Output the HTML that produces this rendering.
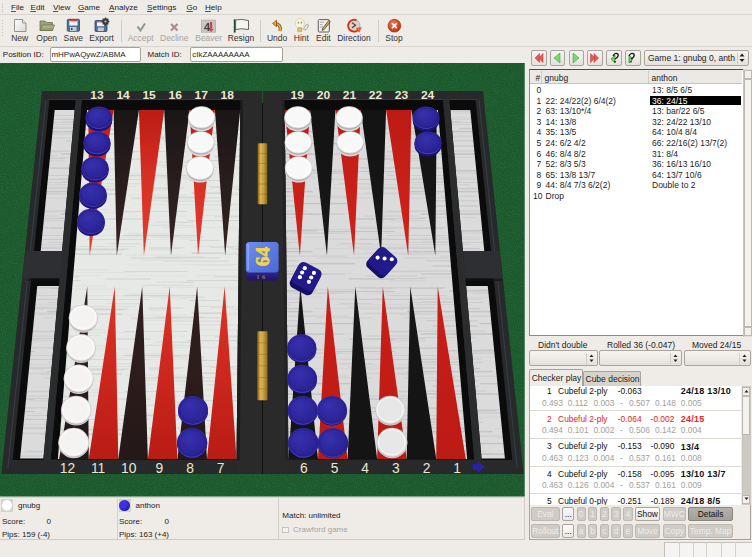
<!DOCTYPE html>
<html><head><meta charset="utf-8">
<style>
*{margin:0;padding:0;box-sizing:border-box}
html,body{width:752px;height:557px;overflow:hidden;background:#efebe7;font-family:"Liberation Sans",sans-serif;font-size:8px;color:#1c1c1c}
.a{position:absolute;white-space:nowrap}
.menu span{position:absolute;top:2.6px;font-size:8.1px}
.menu u{text-decoration-color:#555;text-underline-offset:1px}
.tb{position:absolute;top:33px;font-size:8.5px;text-align:center;width:50px;margin-left:-25px;color:#333}
.dis{color:#a8a49c}
.entry{position:absolute;background:#fff;border:1px solid #a8a39a;border-radius:2px}
.btn{position:absolute;border:1px solid #a9a49c;border-radius:2px;background:linear-gradient(#f6f4f2,#e4e0dc)}
.list{font-size:8.5px}
</style></head><body>
<!-- menubar -->
<div class="a" style="left:0;top:0;width:752px;height:15px;border-bottom:1px solid #d8d4ce"></div>
<div class="a menu" style="left:0;top:0;height:15px;width:752px">
<span style="left:11px"><u>F</u>ile</span>
<span style="left:30.5px"><u>E</u>dit</span>
<span style="left:53px"><u>V</u>iew</span>
<span style="left:78px"><u>G</u>ame</span>
<span style="left:109px"><u>A</u>nalyze</span>
<span style="left:147px"><u>S</u>ettings</span>
<span style="left:186.5px"><u>G</u>o</span>
<span style="left:205px"><u>H</u>elp</span>
</div>
<!-- toolbar -->
<div class="a" style="left:0;top:46px;width:752px;height:1px;background:#d8d4ce"></div>
<svg class="a" style="left:0;top:0" width="420" height="46">
<defs>
<linearGradient id="pg" x1="0" y1="0" x2="1" y2="1"><stop offset="0" stop-color="#ffffff"/><stop offset="1" stop-color="#d8d8d4"/></linearGradient>
<linearGradient id="fg" x1="0" y1="0" x2="0" y2="1"><stop offset="0" stop-color="#b8c090"/><stop offset="1" stop-color="#8c9464"/></linearGradient>
<radialGradient id="rg" cx="0.4" cy="0.35" r="0.7"><stop offset="0" stop-color="#f08050"/><stop offset="1" stop-color="#b83010"/></radialGradient>
</defs>
<!-- handle grips -->
<g fill="#c8c4bc"><rect x="2" y="3" width="1" height="1"/><rect x="2" y="5" width="1" height="1"/><rect x="2" y="7" width="1" height="1"/><rect x="2" y="9" width="1" height="1"/><rect x="2" y="11" width="1" height="1"/>
<rect x="2" y="20" width="1" height="1"/><rect x="2" y="23" width="1" height="1"/><rect x="2" y="26" width="1" height="1"/><rect x="2" y="29" width="1" height="1"/><rect x="2" y="32" width="1" height="1"/><rect x="2" y="35" width="1" height="1"/></g>
<!-- New -->
<path d="M14.5,19.5 H22.5 L26,23 V31.5 H14.5 Z" fill="url(#pg)" stroke="#8a8a86" stroke-width="0.9"/>
<path d="M22.5,19.5 V23 H26" fill="#e8e8e4" stroke="#8a8a86" stroke-width="0.8"/>
<!-- Open -->
<path d="M40,21 H45 L46.5,22.5 H52.5 V30.5 H40 Z" fill="#9aa276" stroke="#6e7450" stroke-width="0.8"/>
<path d="M40,30.5 L42.5,25 H54.5 L52.5,30.5 Z" fill="url(#fg)" stroke="#6e7450" stroke-width="0.8"/>
<!-- Save -->
<rect x="67.3" y="19.3" width="12.2" height="12" rx="1" fill="#4d6f9c" stroke="#2d4464" stroke-width="0.8"/>
<rect x="69.3" y="20" width="8.2" height="5.5" fill="#f4f4f4"/><rect x="69.3" y="20" width="8.2" height="1.3" fill="#d84040"/>
<rect x="70" y="27" width="6.5" height="4" fill="#c8ccd0"/><rect x="71" y="28" width="1.5" height="2" fill="#2d4464"/>
<!-- Export -->
<rect x="95" y="20.5" width="12" height="11" rx="1" fill="#4d6f9c" stroke="#2d4464" stroke-width="0.8"/>
<rect x="97" y="21.2" width="7" height="5" fill="#f4f4f4"/><rect x="97" y="21.2" width="7" height="1.2" fill="#d84040"/>
<rect x="97.8" y="27.5" width="6" height="3.6" fill="#c8ccd0"/>
<circle cx="105.5" cy="21.5" r="3.2" fill="#3a3a3a"/><circle cx="105.5" cy="21.5" r="1.2" fill="#b0b0b0"/>
<g stroke="#3a3a3a" stroke-width="1.2"><line x1="105.5" y1="17.5" x2="105.5" y2="25.5"/><line x1="101.5" y1="21.5" x2="109.5" y2="21.5"/><line x1="102.7" y1="18.7" x2="108.3" y2="24.3"/><line x1="108.3" y1="18.7" x2="102.7" y2="24.3"/></g>
<circle cx="105.5" cy="21.5" r="1.1" fill="#c0c0c0"/>
<!-- Accept -->
<path d="M137.5,26.5 L140.5,30.5 L145,23.5" fill="none" stroke="#8a9a88" stroke-width="2"/>
<!-- Decline -->
<path d="M171,24 L177.5,30.5 M177.5,24 L171,30.5" fill="none" stroke="#a88a88" stroke-width="2"/>
<!-- Beaver -->
<rect x="201" y="19.7" width="15" height="13" fill="#b8b4b0"/>
<rect x="202" y="20.7" width="13" height="11" fill="#cac6c2"/>
<text x="204" y="30.5" font-size="11" font-weight="bold" fill="#404040" font-family="Liberation Sans">4</text>
<rect x="210" y="22" width="2.2" height="8" fill="#c84a4a"/><polygon points="208.5,29 213.7,29 211.1,32" fill="#c84a4a"/>
<!-- Resign -->
<rect x="233.8" y="19.3" width="1.8" height="13.3" fill="#1e4a26"/>
<path d="M235.6,20 Q241,18.5 248.5,20.5 V29.5 Q241,28 235.6,29.5 Z" fill="#f4f4f0" stroke="#404440" stroke-width="0.8"/>
<!-- Undo -->
<path d="M280,31 Q281.5,24 275,23.5" fill="none" stroke="#7a4a0a" stroke-width="3"/>
<path d="M280,31 Q281.5,24 275,23.5" fill="none" stroke="#f0b040" stroke-width="1.6"/>
<polygon points="272.5,23.5 276.5,20.3 276.5,26.7" fill="#f0a030" stroke="#7a4a0a" stroke-width="0.7"/>
<!-- Hint -->
<circle cx="299.8" cy="23.3" r="4.6" fill="#f6f4dc" stroke="#d4d0a8" stroke-width="0.7"/>
<rect x="297.6" y="27.8" width="4.4" height="3.8" rx="0.8" fill="#d8c070" stroke="#a89040" stroke-width="0.5"/>
<g fill="#707050"><rect x="297.8" y="21.8" width="1" height="1.6"/><rect x="300.8" y="21.8" width="1" height="1.6"/></g>
<path d="M303.5,29 L306,25 Q307.5,23.5 308.5,25 L307.5,28 Q306.5,30 304.5,30 Z" fill="#ecece4" stroke="#8c8c84" stroke-width="0.7"/>
<!-- Edit -->
<rect x="318.3" y="19.6" width="11" height="12.4" rx="1" fill="#f0f0ee" stroke="#606060" stroke-width="1"/>
<g stroke="#8a8a8a" stroke-width="0.7"><line x1="320" y1="22.2" x2="324" y2="22.2"/><line x1="320" y1="24.6" x2="322.5" y2="24.6"/><line x1="320" y1="27" x2="323" y2="27"/></g>
<path d="M322.5,28.5 L328.8,20.5 L330.3,21.7 L324,29.7 L322,30.3 Z" fill="#e0b040" stroke="#303030" stroke-width="0.7"/>
<!-- Direction -->
<circle cx="354.2" cy="25.4" r="5.8" fill="#d4d4d0" stroke="#909090" stroke-width="0.6"/>
<path d="M356.5,20.3 A5.9,5.9 0 1 0 358.8,29.2" fill="none" stroke="#e02a12" stroke-width="1.9"/>
<path d="M352,22.6 L355.6,25.2 L352,27.8" fill="none" stroke="#3a3a3a" stroke-width="1.1"/>
<polygon points="356.2,28.2 361.2,27.6 359.2,32.2" fill="#f06a20" stroke="#c04010" stroke-width="0.5"/>
<!-- Stop -->
<circle cx="394.4" cy="25.7" r="6.4" fill="url(#rg)" stroke="#902808" stroke-width="0.6"/>
<path d="M392,23.3 L396.8,28.1 M396.8,23.3 L392,28.1" stroke="#fff" stroke-width="1.6"/>
</svg>

<div class="tb" style="left:19.7px">New</div>
<div class="tb" style="left:46.7px">Open</div>
<div class="tb" style="left:73.3px">Save</div>
<div class="tb" style="left:101.6px">Export</div>
<div class="tb dis" style="left:140.7px">Accept</div>
<div class="tb dis" style="left:174.3px">Decline</div>
<div class="tb dis" style="left:208.7px">Beaver</div>
<div class="tb" style="left:240.9px">Resign</div>
<div class="tb" style="left:277.1px">Undo</div>
<div class="tb" style="left:301.4px">Hint</div>
<div class="tb" style="left:323.4px">Edit</div>
<div class="tb" style="left:354px">Direction</div>
<div class="tb" style="left:394px">Stop</div>
<div class="a" style="left:120.5px;top:20px;width:1px;height:22px;background:#d0ccc6"></div>
<div class="a" style="left:259.5px;top:20px;width:1px;height:22px;background:#d0ccc6"></div>
<div class="a" style="left:377.5px;top:20px;width:1px;height:22px;background:#d0ccc6"></div>
<!-- ids row -->
<div class="a" style="left:2.8px;top:50.3px;font-size:8px">Position ID:</div>
<div class="entry" style="left:49.5px;top:47px;width:91.5px;height:14.5px"></div>
<div class="a" style="left:51.5px;top:50.3px;font-size:7.95px">mHPwAQywZ/ABMA</div>
<div class="a" style="left:147.5px;top:50.3px;font-size:8px">Match ID:</div>
<div class="entry" style="left:190px;top:47px;width:93px;height:14.5px"></div>
<div class="a" style="left:192.3px;top:50.3px;font-size:7.95px">cIkZAAAAAAAA</div>
<!-- board -->
<svg class="a" style="left:0;top:0" width="752" height="557" font-family="Liberation Sans">
<defs>
<linearGradient id="redTL" x1="0" y1="0" x2="0" y2="1"><stop offset="0" stop-color="#bc1c14"/><stop offset="0.5" stop-color="#d83226"/><stop offset="1" stop-color="#e03c2e"/></linearGradient>
<linearGradient id="redTR" x1="0" y1="0" x2="0" y2="1"><stop offset="0" stop-color="#bc1a14"/><stop offset="0.5" stop-color="#c82018"/><stop offset="1" stop-color="#cc2419"/></linearGradient>
<linearGradient id="redBL" x1="0" y1="1" x2="0" y2="0"><stop offset="0" stop-color="#b81c14"/><stop offset="0.6" stop-color="#d02a20"/><stop offset="1" stop-color="#dc3628"/></linearGradient>
<linearGradient id="redBR" x1="0" y1="1" x2="0" y2="0"><stop offset="0" stop-color="#bc1a14"/><stop offset="1" stop-color="#c82018"/></linearGradient>
<linearGradient id="blkTL" x1="0" y1="0" x2="0" y2="1"><stop offset="0" stop-color="#1a1616"/><stop offset="1" stop-color="#382424"/></linearGradient>
<linearGradient id="blkTR" x1="0" y1="0" x2="0" y2="1"><stop offset="0" stop-color="#131313"/><stop offset="1" stop-color="#1a1818"/></linearGradient>
<linearGradient id="blkBL" x1="0" y1="1" x2="0" y2="0"><stop offset="0" stop-color="#241818"/><stop offset="1" stop-color="#34201f"/></linearGradient>
<linearGradient id="blkBR" x1="0" y1="1" x2="0" y2="0"><stop offset="0" stop-color="#141414"/><stop offset="1" stop-color="#181616"/></linearGradient>
<radialGradient id="bface" cx="0.4" cy="0.35" r="0.75"><stop offset="0" stop-color="#3630ac"/><stop offset="0.7" stop-color="#2c2498"/><stop offset="1" stop-color="#282090"/></radialGradient>
<linearGradient id="gold" x1="0" y1="0" x2="1" y2="0"><stop offset="0" stop-color="#7a5a18"/><stop offset="0.3" stop-color="#dcb450"/><stop offset="0.6" stop-color="#c8a040"/><stop offset="1" stop-color="#8a6820"/></linearGradient>
<linearGradient id="cube" x1="0" y1="0" x2="1" y2="1"><stop offset="0" stop-color="#6e8eec"/><stop offset="1" stop-color="#4a68d6"/></linearGradient>
<linearGradient id="cubeF" x1="0" y1="0" x2="0" y2="1"><stop offset="0" stop-color="#3a40a8"/><stop offset="1" stop-color="#24106a"/></linearGradient>
<linearGradient id="wsideT" x1="0" y1="0" x2="0" y2="1"><stop offset="0" stop-color="#a8a8a8"/><stop offset="1" stop-color="#e4e4e4"/></linearGradient>
<linearGradient id="bsideT" x1="0" y1="0" x2="0" y2="1"><stop offset="0" stop-color="#1a1270"/><stop offset="1" stop-color="#3a30a8"/></linearGradient>

<pattern id="wood" patternUnits="userSpaceOnUse" width="180" height="60"><rect width="180" height="60" fill="#e7e9e7"/>
<rect x="58.3" y="9.1" width="65.6" height="1.4" fill="#d6d8d6"/>
<rect x="16.9" y="35.0" width="83.7" height="0.6" fill="#dcdedc"/>
<rect x="15.5" y="25.1" width="36.8" height="0.6" fill="#dfe1df"/>
<rect x="148.8" y="7.4" width="35.6" height="1.4" fill="#d6d8d6"/>
<rect x="-31.2" y="7.4" width="35.6" height="1" fill="#d6d8d6"/>
<rect x="105.4" y="3.0" width="35.5" height="1" fill="#dcdedc"/>
<rect x="75.4" y="32.4" width="60.0" height="0.6" fill="#dcdedc"/>
<rect x="104.7" y="38.3" width="46.1" height="1.4" fill="#d6d8d6"/>
<rect x="10.7" y="12.4" width="67.6" height="1" fill="#dfe1df"/>
<rect x="83.8" y="55.4" width="45.3" height="0.6" fill="#dcdedc"/>
<rect x="125.8" y="14.6" width="60.2" height="1" fill="#dfe1df"/>
<rect x="-54.2" y="14.6" width="60.2" height="1" fill="#dfe1df"/>
<rect x="131.3" y="17.3" width="88.6" height="1.4" fill="#d6d8d6"/>
<rect x="-48.7" y="17.3" width="88.6" height="1" fill="#d6d8d6"/>
<rect x="75.3" y="45.4" width="30.6" height="1" fill="#dfe1df"/>
<rect x="7.1" y="40.1" width="73.5" height="1" fill="#d2d4d2"/>
<rect x="125.2" y="35.7" width="60.6" height="0.6" fill="#dfe1df"/>
<rect x="-54.8" y="35.7" width="60.6" height="1" fill="#dfe1df"/>
<rect x="151.2" y="56.7" width="53.2" height="0.6" fill="#d6d8d6"/>
<rect x="-28.8" y="56.7" width="53.2" height="1" fill="#d6d8d6"/>
<rect x="131.6" y="18.6" width="60.5" height="1" fill="#dfe1df"/>
<rect x="-48.4" y="18.6" width="60.5" height="1" fill="#dfe1df"/>
<rect x="129.0" y="53.2" width="44.3" height="1" fill="#dfe1df"/>
<rect x="30.2" y="7.0" width="24.1" height="0.6" fill="#d2d4d2"/>
<rect x="132.9" y="23.9" width="84.2" height="0.6" fill="#dfe1df"/>
<rect x="-47.1" y="23.9" width="84.2" height="1" fill="#dfe1df"/>
<rect x="29.9" y="24.1" width="39.4" height="1" fill="#dcdedc"/>
<rect x="155.5" y="16.7" width="49.1" height="1.4" fill="#d2d4d2"/>
<rect x="-24.5" y="16.7" width="49.1" height="1" fill="#d2d4d2"/>
<rect x="159.2" y="57.5" width="30.6" height="0.6" fill="#dcdedc"/>
<rect x="-20.8" y="57.5" width="30.6" height="1" fill="#dcdedc"/>
<rect x="41.8" y="14.0" width="53.9" height="1" fill="#dcdedc"/>
<rect x="50.7" y="8.7" width="57.4" height="0.6" fill="#d2d4d2"/>
<rect x="124.3" y="30.9" width="63.2" height="1" fill="#d6d8d6"/>
<rect x="-55.7" y="30.9" width="63.2" height="1" fill="#d6d8d6"/>
<rect x="161.9" y="46.8" width="81.2" height="1" fill="#dfe1df"/>
<rect x="-18.1" y="46.8" width="81.2" height="1" fill="#dfe1df"/>
<rect x="71.8" y="6.2" width="64.4" height="0.6" fill="#d6d8d6"/>
<rect x="12.1" y="12.5" width="31.4" height="1.4" fill="#d2d4d2"/>
<rect x="9.5" y="0.0" width="30.6" height="1" fill="#d6d8d6"/>
<rect x="110.5" y="4.2" width="34.6" height="0.6" fill="#dfe1df"/>
<rect x="114.2" y="57.3" width="62.2" height="0.6" fill="#dfe1df"/>
<rect x="20.8" y="29.3" width="88.4" height="1" fill="#dfe1df"/>
<rect x="56.1" y="8.6" width="72.5" height="1" fill="#d2d4d2"/>
<rect x="149.2" y="9.7" width="21.6" height="0.6" fill="#d2d4d2"/>
<rect x="124.2" y="54.8" width="73.1" height="1.4" fill="#d2d4d2"/>
<rect x="-55.8" y="54.8" width="73.1" height="1" fill="#d2d4d2"/>
<rect x="155.4" y="41.8" width="38.3" height="0.6" fill="#d2d4d2"/>
<rect x="-24.6" y="41.8" width="38.3" height="1" fill="#d2d4d2"/>
<rect x="64.0" y="13.4" width="57.9" height="1.4" fill="#d2d4d2"/>
<rect x="40.1" y="48.7" width="88.9" height="0.6" fill="#dcdedc"/>
<rect x="147.3" y="44.4" width="35.9" height="1" fill="#dfe1df"/>
<rect x="-32.7" y="44.4" width="35.9" height="1" fill="#dfe1df"/>
<rect x="131.6" y="59.4" width="75.3" height="1" fill="#dfe1df"/>
<rect x="-48.4" y="59.4" width="75.3" height="1" fill="#dfe1df"/>
<rect x="34.9" y="36.3" width="44.1" height="1" fill="#d2d4d2"/>
<rect x="14.5" y="6.1" width="52.9" height="0.6" fill="#d2d4d2"/>
<rect x="86.9" y="59.1" width="62.7" height="1" fill="#d6d8d6"/>
<rect x="163.7" y="20.6" width="65.0" height="1" fill="#d6d8d6"/>
<rect x="-16.3" y="20.6" width="65.0" height="1" fill="#d6d8d6"/>
<rect x="140.8" y="45.0" width="53.5" height="1" fill="#dcdedc"/>
<rect x="-39.2" y="45.0" width="53.5" height="1" fill="#dcdedc"/>
<rect x="142.0" y="20.0" width="76.1" height="1" fill="#dfe1df"/>
<rect x="-38.0" y="20.0" width="76.1" height="1" fill="#dfe1df"/>
</pattern>
<pattern id="woodR" patternUnits="userSpaceOnUse" width="180" height="60"><rect width="180" height="60" fill="#dadbda"/>
<rect x="72.2" y="56.8" width="70.7" height="0.6" fill="#cfd0cf"/>
<rect x="5.0" y="35.4" width="52.6" height="1.4" fill="#cfd0cf"/>
<rect x="148.8" y="58.8" width="66.0" height="0.6" fill="#c4c5c4"/>
<rect x="-31.2" y="58.8" width="66.0" height="1" fill="#c4c5c4"/>
<rect x="98.8" y="7.9" width="21.0" height="1.4" fill="#c8c9c8"/>
<rect x="134.9" y="8.4" width="89.1" height="0.6" fill="#cfd0cf"/>
<rect x="-45.1" y="8.4" width="89.1" height="1" fill="#cfd0cf"/>
<rect x="5.0" y="12.8" width="55.1" height="1" fill="#c4c5c4"/>
<rect x="98.0" y="50.1" width="24.3" height="1" fill="#c4c5c4"/>
<rect x="119.2" y="48.9" width="56.2" height="1.4" fill="#cfd0cf"/>
<rect x="27.3" y="30.6" width="81.1" height="1.4" fill="#cfd0cf"/>
<rect x="0.7" y="48.0" width="32.1" height="1.4" fill="#d2d3d2"/>
<rect x="130.5" y="33.4" width="42.8" height="0.6" fill="#d2d3d2"/>
<rect x="159.0" y="3.4" width="33.4" height="0.6" fill="#c8c9c8"/>
<rect x="-21.0" y="3.4" width="33.4" height="1" fill="#c8c9c8"/>
<rect x="91.4" y="33.7" width="73.2" height="1" fill="#c8c9c8"/>
<rect x="58.6" y="58.4" width="62.4" height="1.4" fill="#cfd0cf"/>
<rect x="49.9" y="30.5" width="76.5" height="1.4" fill="#cfd0cf"/>
<rect x="94.2" y="52.6" width="84.9" height="1" fill="#cfd0cf"/>
<rect x="24.7" y="7.3" width="50.9" height="1.4" fill="#c8c9c8"/>
<rect x="43.3" y="4.4" width="66.9" height="0.6" fill="#c8c9c8"/>
<rect x="169.1" y="38.6" width="45.6" height="0.6" fill="#c4c5c4"/>
<rect x="-10.9" y="38.6" width="45.6" height="1" fill="#c4c5c4"/>
<rect x="174.2" y="13.2" width="86.7" height="1" fill="#d2d3d2"/>
<rect x="-5.8" y="13.2" width="86.7" height="1" fill="#d2d3d2"/>
<rect x="29.3" y="40.1" width="35.7" height="1.4" fill="#d2d3d2"/>
<rect x="72.7" y="25.3" width="45.0" height="1.4" fill="#c8c9c8"/>
<rect x="65.9" y="20.3" width="52.1" height="1" fill="#c8c9c8"/>
<rect x="59.7" y="37.4" width="55.9" height="0.6" fill="#c8c9c8"/>
<rect x="177.3" y="47.3" width="88.0" height="0.6" fill="#c8c9c8"/>
<rect x="-2.7" y="47.3" width="88.0" height="1" fill="#c8c9c8"/>
<rect x="47.8" y="2.4" width="74.5" height="0.6" fill="#c4c5c4"/>
<rect x="147.6" y="51.0" width="67.3" height="1" fill="#c4c5c4"/>
<rect x="-32.4" y="51.0" width="67.3" height="1" fill="#c4c5c4"/>
<rect x="26.9" y="55.2" width="59.9" height="0.6" fill="#c4c5c4"/>
<rect x="50.2" y="48.0" width="32.8" height="1" fill="#c8c9c8"/>
<rect x="168.9" y="38.1" width="76.1" height="1.4" fill="#c8c9c8"/>
<rect x="-11.1" y="38.1" width="76.1" height="1" fill="#c8c9c8"/>
<rect x="154.1" y="4.0" width="80.4" height="0.6" fill="#d2d3d2"/>
<rect x="-25.9" y="4.0" width="80.4" height="1" fill="#d2d3d2"/>
<rect x="61.0" y="33.2" width="84.9" height="1.4" fill="#c4c5c4"/>
<rect x="23.3" y="31.6" width="36.7" height="0.6" fill="#c8c9c8"/>
<rect x="47.1" y="10.9" width="85.3" height="1.4" fill="#c4c5c4"/>
<rect x="136.7" y="17.4" width="55.0" height="1" fill="#cfd0cf"/>
<rect x="-43.3" y="17.4" width="55.0" height="1" fill="#cfd0cf"/>
<rect x="62.5" y="1.1" width="37.5" height="0.6" fill="#c8c9c8"/>
<rect x="132.0" y="33.1" width="33.3" height="0.6" fill="#d2d3d2"/>
<rect x="168.2" y="6.4" width="77.3" height="1.4" fill="#d2d3d2"/>
<rect x="-11.8" y="6.4" width="77.3" height="1" fill="#d2d3d2"/>
<rect x="89.1" y="50.1" width="47.5" height="1.4" fill="#c4c5c4"/>
<rect x="38.7" y="13.8" width="33.9" height="1" fill="#cfd0cf"/>
<rect x="178.1" y="58.9" width="78.6" height="0.6" fill="#c8c9c8"/>
<rect x="-1.9" y="58.9" width="78.6" height="1" fill="#c8c9c8"/>
<rect x="112.6" y="52.8" width="50.2" height="0.6" fill="#c8c9c8"/>
<rect x="119.7" y="22.9" width="55.4" height="1.4" fill="#c4c5c4"/>
<rect x="43.6" y="17.6" width="52.2" height="1" fill="#cfd0cf"/>
<rect x="80.2" y="15.8" width="87.3" height="0.6" fill="#c4c5c4"/>
<rect x="6.2" y="52.9" width="35.3" height="0.6" fill="#cfd0cf"/>
</pattern>
</defs>
<filter id="noise" x="0" y="0" width="100%" height="100%"><feTurbulence type="fractalNoise" baseFrequency="0.9" numOctaves="2" seed="3"/><feColorMatrix values="0 0 0 0 0.08  0 0 0 0 0.34  0 0 0 0 0.16  0 0 0 1.6 -0.6"/><feComposite in2="SourceGraphic" operator="in"/></filter>
<rect x="0" y="63" width="524.7" height="433.5" fill="#1b582b"/>
<rect x="0" y="63" width="524.7" height="433.5" fill="#1b582b" filter="url(#noise)" opacity="0.3"/>
<polygon points="42.02,91.00 482.98,91.00 523.68,474.00 1.32,474.00" fill="#28292b"/>
<line x1="46.04" y1="100" x2="7.81" y2="468" stroke="#3c4450" stroke-width="0.8"/>
<line x1="478.96" y1="100" x2="517.19" y2="468" stroke="#3c4450" stroke-width="0.8"/>
<line x1="47.58" y1="99.5" x2="477.42" y2="99.5" stroke="#3a3e44" stroke-width="0.8"/>
<polygon points="49.52,100.00 77.19,100.00 45.17,460.00 12.73,460.00" fill="#0b0b0b"/>
<polygon points="81.87,100.00 240.36,100.00 236.54,459.50 50.70,459.50" fill="#0b0b0b"/>
<polygon points="447.81,100.00 475.48,100.00 512.27,460.00 479.83,460.00" fill="#0b0b0b"/>
<polygon points="284.64,100.00 443.13,100.00 474.30,459.50 288.46,459.50" fill="#0b0b0b"/>
<polygon points="87.10,110.00 240.25,110.00 236.54,459.00 57.86,459.00" fill="url(#wood)"/>
<polygon points="284.75,110.00 437.90,110.00 467.14,459.00 288.46,459.00" fill="url(#woodR)"/>
<polygon points="54.70,110.00 74.70,110.00 62.05,251.00 40.71,251.00" fill="url(#woodR)"/>
<polygon points="37.23,286.00 58.91,286.00 43.44,458.50 20.11,458.50" fill="url(#woodR)"/>
<polygon points="25.55,251.00 63.76,251.00 61.32,278.50 22.63,278.50" fill="#2d2f32"/>
<polygon points="27.43,278.50 61.32,278.50 61.09,281.00 27.17,281.00" fill="#141414" opacity="0.6"/>
<polygon points="75.64,99.50 81.91,99.50 50.66,460.00 43.31,460.00" fill="#2b2c2e"/>
<polygon points="450.30,110.00 470.30,110.00 484.29,251.00 462.95,251.00" fill="url(#woodR)"/>
<polygon points="466.09,286.00 487.77,286.00 504.89,458.50 481.56,458.50" fill="url(#woodR)"/>
<polygon points="461.24,251.00 499.45,251.00 502.37,278.50 463.68,278.50" fill="#2d2f32"/>
<polygon points="463.68,278.50 502.37,278.50 502.63,281.00 463.91,281.00" fill="#141414" opacity="0.6"/>
<polygon points="443.09,99.50 449.36,99.50 481.69,460.00 474.34,460.00" fill="#2b2c2e"/>
<polygon points="240.45,91.00 284.55,91.00 288.62,474.00 236.38,474.00" fill="#2a2a2a"/>
<polygon points="240.36,100.00 243.09,100.00 239.74,460.00 236.53,460.00" fill="#121212" opacity="0.55"/>
<polygon points="281.91,100.00 284.64,100.00 288.47,460.00 285.26,460.00" fill="#181818" opacity="0.35"/>
<line x1="262.50" y1="91" x2="262.50" y2="474" stroke="#101010" stroke-width="0.9"/>
<line x1="262.50" y1="91" x2="262.50" y2="103" stroke="#1c5c2d" stroke-width="0.9"/>
<polygon points="88.25,110.00 113.58,110.00 89.66,255.80" fill="url(#redTL)"/>
<polygon points="59.21,459.00 88.76,459.00 87.30,286.50" fill="url(#blkBL)"/>
<polygon points="113.58,110.00 138.92,110.00 116.76,255.80" fill="url(#blkTL)"/>
<polygon points="88.76,459.00 118.32,459.00 114.76,286.50" fill="url(#redBL)"/>
<polygon points="138.92,110.00 164.25,110.00 143.86,255.80" fill="url(#redTL)"/>
<polygon points="118.32,459.00 147.87,459.00 142.23,286.50" fill="url(#blkBL)"/>
<polygon points="164.25,110.00 189.58,110.00 170.96,255.80" fill="url(#blkTL)"/>
<polygon points="147.87,459.00 177.43,459.00 169.70,286.50" fill="url(#redBL)"/>
<polygon points="189.58,110.00 214.92,110.00 198.05,255.80" fill="url(#redTL)"/>
<polygon points="177.43,459.00 206.99,459.00 197.17,286.50" fill="url(#blkBL)"/>
<polygon points="214.92,110.00 240.25,110.00 225.15,255.80" fill="url(#blkTL)"/>
<polygon points="206.99,459.00 236.54,459.00 224.64,286.50" fill="url(#redBL)"/>
<polygon points="284.75,110.00 310.08,110.00 299.85,255.80" fill="url(#redTR)"/>
<polygon points="288.46,459.00 318.01,459.00 300.36,286.50" fill="url(#blkBR)"/>
<polygon points="310.08,110.00 335.42,110.00 326.95,255.80" fill="url(#blkTR)"/>
<polygon points="318.01,459.00 347.57,459.00 327.83,286.50" fill="url(#redBR)"/>
<polygon points="335.42,110.00 360.75,110.00 354.04,255.80" fill="url(#redTR)"/>
<polygon points="347.57,459.00 377.13,459.00 355.30,286.50" fill="url(#blkBR)"/>
<polygon points="360.75,110.00 386.08,110.00 381.14,255.80" fill="url(#blkTR)"/>
<polygon points="377.13,459.00 406.68,459.00 382.77,286.50" fill="url(#redBR)"/>
<polygon points="386.08,110.00 411.42,110.00 408.24,255.80" fill="url(#redTR)"/>
<polygon points="406.68,459.00 436.24,459.00 410.24,286.50" fill="url(#blkBR)"/>
<polygon points="411.42,110.00 436.75,110.00 435.34,255.80" fill="url(#blkTR)"/>
<polygon points="436.24,459.00 465.79,459.00 437.70,286.50" fill="url(#redBR)"/>
<polygon points="84.75,100.00 240.36,100.00 240.25,110.00 83.90,110.00" fill="#0b0b0b"/>
<polygon points="284.64,100.00 440.25,100.00 441.10,110.00 284.75,110.00" fill="#0b0b0b"/>
<rect x="257.6" y="143.3" width="9.6" height="61" rx="1.2" fill="url(#gold)"/>
<line x1="258.1" y1="153.5" x2="266.70000000000005" y2="153.5" stroke="#7a5a20" stroke-width="0.5" opacity="0.7"/>
<line x1="258.1" y1="163.6" x2="266.70000000000005" y2="163.6" stroke="#7a5a20" stroke-width="0.5" opacity="0.7"/>
<line x1="258.1" y1="173.8" x2="266.70000000000005" y2="173.8" stroke="#7a5a20" stroke-width="0.5" opacity="0.7"/>
<line x1="258.1" y1="184.0" x2="266.70000000000005" y2="184.0" stroke="#7a5a20" stroke-width="0.5" opacity="0.7"/>
<line x1="258.1" y1="194.1" x2="266.70000000000005" y2="194.1" stroke="#7a5a20" stroke-width="0.5" opacity="0.7"/>
<rect x="257.2" y="331.3" width="10.4" height="69" rx="1.2" fill="url(#gold)"/>
<line x1="257.7" y1="342.8" x2="267.09999999999997" y2="342.8" stroke="#7a5a20" stroke-width="0.5" opacity="0.7"/>
<line x1="257.7" y1="354.3" x2="267.09999999999997" y2="354.3" stroke="#7a5a20" stroke-width="0.5" opacity="0.7"/>
<line x1="257.7" y1="365.8" x2="267.09999999999997" y2="365.8" stroke="#7a5a20" stroke-width="0.5" opacity="0.7"/>
<line x1="257.7" y1="377.3" x2="267.09999999999997" y2="377.3" stroke="#7a5a20" stroke-width="0.5" opacity="0.7"/>
<line x1="257.7" y1="388.8" x2="267.09999999999997" y2="388.8" stroke="#7a5a20" stroke-width="0.5" opacity="0.7"/>
<text x="90.3" y="99.2" font-size="10.6" font-weight="bold" fill="#ebe7d2" textLength="13.4" lengthAdjust="spacingAndGlyphs">13</text>
<text x="116.4" y="99.2" font-size="10.6" font-weight="bold" fill="#ebe7d2" textLength="13.4" lengthAdjust="spacingAndGlyphs">14</text>
<text x="142.4" y="99.2" font-size="10.6" font-weight="bold" fill="#ebe7d2" textLength="13.4" lengthAdjust="spacingAndGlyphs">15</text>
<text x="168.5" y="99.2" font-size="10.6" font-weight="bold" fill="#ebe7d2" textLength="13.4" lengthAdjust="spacingAndGlyphs">16</text>
<text x="194.5" y="99.2" font-size="10.6" font-weight="bold" fill="#ebe7d2" textLength="13.4" lengthAdjust="spacingAndGlyphs">17</text>
<text x="220.6" y="99.2" font-size="10.6" font-weight="bold" fill="#ebe7d2" textLength="13.4" lengthAdjust="spacingAndGlyphs">18</text>
<text x="290.6" y="99.2" font-size="10.6" font-weight="bold" fill="#ebe7d2" textLength="13.4" lengthAdjust="spacingAndGlyphs">19</text>
<text x="316.7" y="99.2" font-size="10.6" font-weight="bold" fill="#ebe7d2" textLength="13.4" lengthAdjust="spacingAndGlyphs">20</text>
<text x="342.7" y="99.2" font-size="10.6" font-weight="bold" fill="#ebe7d2" textLength="13.4" lengthAdjust="spacingAndGlyphs">21</text>
<text x="368.8" y="99.2" font-size="10.6" font-weight="bold" fill="#ebe7d2" textLength="13.4" lengthAdjust="spacingAndGlyphs">22</text>
<text x="394.8" y="99.2" font-size="10.6" font-weight="bold" fill="#ebe7d2" textLength="13.4" lengthAdjust="spacingAndGlyphs">23</text>
<text x="420.9" y="99.2" font-size="10.6" font-weight="bold" fill="#ebe7d2" textLength="13.4" lengthAdjust="spacingAndGlyphs">24</text>
<text x="67.5" y="472.6" font-size="13.8" fill="#ebe7d2" text-anchor="middle">12</text>
<text x="98.1" y="472.6" font-size="13.8" fill="#ebe7d2" text-anchor="middle">11</text>
<text x="128.8" y="472.6" font-size="13.8" fill="#ebe7d2" text-anchor="middle">10</text>
<text x="159.4" y="472.6" font-size="13.8" fill="#ebe7d2" text-anchor="middle">9</text>
<text x="190.1" y="472.6" font-size="13.8" fill="#ebe7d2" text-anchor="middle">8</text>
<text x="220.7" y="472.6" font-size="13.8" fill="#ebe7d2" text-anchor="middle">7</text>
<text x="303.9" y="472.6" font-size="13.8" fill="#ebe7d2" text-anchor="middle">6</text>
<text x="334.5" y="472.6" font-size="13.8" fill="#ebe7d2" text-anchor="middle">5</text>
<text x="365.2" y="472.6" font-size="13.8" fill="#ebe7d2" text-anchor="middle">4</text>
<text x="395.8" y="472.6" font-size="13.8" fill="#ebe7d2" text-anchor="middle">3</text>
<text x="426.5" y="472.6" font-size="13.8" fill="#ebe7d2" text-anchor="middle">2</text>
<text x="457.1" y="472.6" font-size="13.8" fill="#ebe7d2" text-anchor="middle">1</text>
<ellipse cx="98.93" cy="120.60" rx="13.30" ry="10.80" fill="#1a1274"/>
<rect x="85.63" y="117.30" width="26.60" height="3.30" fill="#1e167e"/>
<ellipse cx="98.93" cy="118.20" rx="13.10" ry="10.80" fill="#463eb4"/>
<ellipse cx="98.93" cy="117.30" rx="13.30" ry="10.80" fill="url(#bface)"/>
<ellipse cx="98.93" cy="117.30" rx="11.70" ry="9.20" fill="none" stroke="#241c88" stroke-width="1" opacity="0.6"/>
<ellipse cx="96.99" cy="145.48" rx="13.44" ry="10.92" fill="#1a1274"/>
<rect x="83.55" y="142.32" width="26.88" height="3.16" fill="#1e167e"/>
<ellipse cx="96.99" cy="143.22" rx="13.24" ry="10.92" fill="#463eb4"/>
<ellipse cx="96.99" cy="142.32" rx="13.44" ry="10.92" fill="url(#bface)"/>
<ellipse cx="96.99" cy="142.32" rx="11.84" ry="9.32" fill="none" stroke="#241c88" stroke-width="1" opacity="0.6"/>
<ellipse cx="95.00" cy="171.01" rx="13.58" ry="11.59" fill="#1a1274"/>
<rect x="81.41" y="167.99" width="27.16" height="3.02" fill="#1e167e"/>
<ellipse cx="95.00" cy="168.89" rx="13.38" ry="11.59" fill="#463eb4"/>
<ellipse cx="95.00" cy="167.99" rx="13.58" ry="11.59" fill="url(#bface)"/>
<ellipse cx="95.00" cy="167.99" rx="11.98" ry="9.99" fill="none" stroke="#241c88" stroke-width="1" opacity="0.6"/>
<ellipse cx="92.95" cy="197.24" rx="13.73" ry="11.76" fill="#1a1274"/>
<rect x="79.22" y="194.36" width="27.45" height="2.87" fill="#1e167e"/>
<ellipse cx="92.95" cy="195.26" rx="13.53" ry="11.76" fill="#463eb4"/>
<ellipse cx="92.95" cy="194.36" rx="13.73" ry="11.76" fill="url(#bface)"/>
<ellipse cx="92.95" cy="194.36" rx="12.13" ry="10.16" fill="none" stroke="#241c88" stroke-width="1" opacity="0.6"/>
<ellipse cx="90.88" cy="223.76" rx="13.87" ry="12.24" fill="#1a1274"/>
<rect x="77.01" y="221.04" width="27.75" height="2.73" fill="#1e167e"/>
<ellipse cx="90.88" cy="221.94" rx="13.67" ry="12.24" fill="#463eb4"/>
<ellipse cx="90.88" cy="221.04" rx="13.87" ry="12.24" fill="url(#bface)"/>
<ellipse cx="90.88" cy="221.04" rx="12.27" ry="10.64" fill="none" stroke="#241c88" stroke-width="1" opacity="0.6"/>
<ellipse cx="426.07" cy="120.60" rx="13.30" ry="10.80" fill="#1a1274"/>
<rect x="412.77" y="117.30" width="26.60" height="3.30" fill="#1e167e"/>
<ellipse cx="426.07" cy="118.20" rx="13.10" ry="10.80" fill="#463eb4"/>
<ellipse cx="426.07" cy="117.30" rx="13.30" ry="10.80" fill="url(#bface)"/>
<ellipse cx="426.07" cy="117.30" rx="11.70" ry="9.20" fill="none" stroke="#241c88" stroke-width="1" opacity="0.6"/>
<ellipse cx="428.01" cy="145.48" rx="13.44" ry="10.92" fill="#1a1274"/>
<rect x="414.57" y="142.32" width="26.88" height="3.16" fill="#1e167e"/>
<ellipse cx="428.01" cy="143.22" rx="13.24" ry="10.92" fill="#463eb4"/>
<ellipse cx="428.01" cy="142.32" rx="13.44" ry="10.92" fill="url(#bface)"/>
<ellipse cx="428.01" cy="142.32" rx="11.84" ry="9.32" fill="none" stroke="#241c88" stroke-width="1" opacity="0.6"/>
<ellipse cx="201.51" cy="120.60" rx="13.30" ry="10.80" fill="#d8d8d8"/>
<rect x="188.21" y="117.30" width="26.60" height="3.30" fill="#a4a4a4"/>
<ellipse cx="201.51" cy="118.95" rx="13.10" ry="10.80" fill="#b0b0b0"/>
<ellipse cx="201.51" cy="117.30" rx="13.30" ry="10.80" fill="#f8f8f8" stroke="#c4c4c4" stroke-width="0.6"/>
<ellipse cx="201.21" cy="117.00" rx="11.50" ry="9.00" fill="#f8f8f8" stroke="#ffffff" stroke-width="0.8" opacity="0.9"/>
<ellipse cx="200.78" cy="145.48" rx="13.44" ry="10.92" fill="#d8d8d8"/>
<rect x="187.35" y="142.32" width="26.88" height="3.16" fill="#a4a4a4"/>
<ellipse cx="200.78" cy="143.90" rx="13.24" ry="10.92" fill="#b0b0b0"/>
<ellipse cx="200.78" cy="142.32" rx="13.44" ry="10.92" fill="#f8f8f8" stroke="#c4c4c4" stroke-width="0.6"/>
<ellipse cx="200.48" cy="142.02" rx="11.64" ry="9.12" fill="#f8f8f8" stroke="#ffffff" stroke-width="0.8" opacity="0.9"/>
<ellipse cx="200.04" cy="171.01" rx="13.58" ry="11.59" fill="#d8d8d8"/>
<rect x="186.46" y="167.99" width="27.16" height="3.02" fill="#a4a4a4"/>
<ellipse cx="200.04" cy="169.50" rx="13.38" ry="11.59" fill="#b0b0b0"/>
<ellipse cx="200.04" cy="167.99" rx="13.58" ry="11.59" fill="#f8f8f8" stroke="#c4c4c4" stroke-width="0.6"/>
<ellipse cx="199.74" cy="167.69" rx="11.78" ry="9.79" fill="#f8f8f8" stroke="#ffffff" stroke-width="0.8" opacity="0.9"/>
<ellipse cx="297.85" cy="120.60" rx="13.30" ry="10.80" fill="#d8d8d8"/>
<rect x="284.55" y="117.30" width="26.60" height="3.30" fill="#a4a4a4"/>
<ellipse cx="297.85" cy="118.95" rx="13.10" ry="10.80" fill="#b0b0b0"/>
<ellipse cx="297.85" cy="117.30" rx="13.30" ry="10.80" fill="#f8f8f8" stroke="#c4c4c4" stroke-width="0.6"/>
<ellipse cx="297.55" cy="117.00" rx="11.50" ry="9.00" fill="#f8f8f8" stroke="#ffffff" stroke-width="0.8" opacity="0.9"/>
<ellipse cx="298.27" cy="145.48" rx="13.44" ry="10.92" fill="#d8d8d8"/>
<rect x="284.83" y="142.32" width="26.88" height="3.16" fill="#a4a4a4"/>
<ellipse cx="298.27" cy="143.90" rx="13.24" ry="10.92" fill="#b0b0b0"/>
<ellipse cx="298.27" cy="142.32" rx="13.44" ry="10.92" fill="#f8f8f8" stroke="#c4c4c4" stroke-width="0.6"/>
<ellipse cx="297.97" cy="142.02" rx="11.64" ry="9.12" fill="#f8f8f8" stroke="#ffffff" stroke-width="0.8" opacity="0.9"/>
<ellipse cx="298.70" cy="171.01" rx="13.58" ry="11.59" fill="#d8d8d8"/>
<rect x="285.12" y="167.99" width="27.16" height="3.02" fill="#a4a4a4"/>
<ellipse cx="298.70" cy="169.50" rx="13.38" ry="11.59" fill="#b0b0b0"/>
<ellipse cx="298.70" cy="167.99" rx="13.58" ry="11.59" fill="#f8f8f8" stroke="#c4c4c4" stroke-width="0.6"/>
<ellipse cx="298.40" cy="167.69" rx="11.78" ry="9.79" fill="#f8f8f8" stroke="#ffffff" stroke-width="0.8" opacity="0.9"/>
<ellipse cx="349.14" cy="120.60" rx="13.30" ry="10.80" fill="#d8d8d8"/>
<rect x="335.84" y="117.30" width="26.60" height="3.30" fill="#a4a4a4"/>
<ellipse cx="349.14" cy="118.95" rx="13.10" ry="10.80" fill="#b0b0b0"/>
<ellipse cx="349.14" cy="117.30" rx="13.30" ry="10.80" fill="#f8f8f8" stroke="#c4c4c4" stroke-width="0.6"/>
<ellipse cx="348.84" cy="117.00" rx="11.50" ry="9.00" fill="#f8f8f8" stroke="#ffffff" stroke-width="0.8" opacity="0.9"/>
<ellipse cx="350.16" cy="145.48" rx="13.44" ry="10.92" fill="#d8d8d8"/>
<rect x="336.73" y="142.32" width="26.88" height="3.16" fill="#a4a4a4"/>
<ellipse cx="350.16" cy="143.90" rx="13.24" ry="10.92" fill="#b0b0b0"/>
<ellipse cx="350.16" cy="142.32" rx="13.44" ry="10.92" fill="#f8f8f8" stroke="#c4c4c4" stroke-width="0.6"/>
<ellipse cx="349.86" cy="142.02" rx="11.64" ry="9.12" fill="#f8f8f8" stroke="#ffffff" stroke-width="0.8" opacity="0.9"/>
<ellipse cx="73.71" cy="443.90" rx="15.10" ry="14.40" fill="#d8d8d8"/>
<rect x="58.61" y="442.40" width="30.20" height="1.50" fill="#a4a4a4"/>
<ellipse cx="73.71" cy="443.15" rx="14.90" ry="14.40" fill="#b0b0b0"/>
<ellipse cx="73.71" cy="442.40" rx="15.10" ry="14.40" fill="#f4f1f1" stroke="#c4c4c4" stroke-width="0.6"/>
<ellipse cx="73.41" cy="442.10" rx="13.30" ry="12.60" fill="#f6f3f3" stroke="#ffffff" stroke-width="0.8" opacity="0.9"/>
<ellipse cx="76.22" cy="411.64" rx="14.92" ry="13.96" fill="#d8d8d8"/>
<rect x="61.30" y="409.96" width="29.84" height="1.68" fill="#a4a4a4"/>
<ellipse cx="76.22" cy="410.80" rx="14.72" ry="13.96" fill="#b0b0b0"/>
<ellipse cx="76.22" cy="409.96" rx="14.92" ry="13.96" fill="#f4f1f1" stroke="#c4c4c4" stroke-width="0.6"/>
<ellipse cx="75.92" cy="409.66" rx="13.12" ry="12.16" fill="#f6f3f3" stroke="#ffffff" stroke-width="0.8" opacity="0.9"/>
<ellipse cx="78.67" cy="380.28" rx="14.75" ry="13.72" fill="#d8d8d8"/>
<rect x="63.92" y="378.42" width="29.49" height="1.85" fill="#a4a4a4"/>
<ellipse cx="78.67" cy="379.35" rx="14.55" ry="13.72" fill="#b0b0b0"/>
<ellipse cx="78.67" cy="378.42" rx="14.75" ry="13.72" fill="#f4f1f1" stroke="#c4c4c4" stroke-width="0.6"/>
<ellipse cx="78.37" cy="378.12" rx="12.95" ry="11.92" fill="#f6f3f3" stroke="#ffffff" stroke-width="0.8" opacity="0.9"/>
<ellipse cx="81.06" cy="349.66" rx="14.58" ry="13.34" fill="#d8d8d8"/>
<rect x="66.48" y="347.64" width="29.15" height="2.02" fill="#a4a4a4"/>
<ellipse cx="81.06" cy="348.65" rx="14.38" ry="13.34" fill="#b0b0b0"/>
<ellipse cx="81.06" cy="347.64" rx="14.58" ry="13.34" fill="#f4f1f1" stroke="#c4c4c4" stroke-width="0.6"/>
<ellipse cx="80.76" cy="347.34" rx="12.78" ry="11.54" fill="#f6f3f3" stroke="#ffffff" stroke-width="0.8" opacity="0.9"/>
<ellipse cx="83.38" cy="319.94" rx="14.41" ry="12.86" fill="#d8d8d8"/>
<rect x="68.97" y="317.76" width="28.82" height="2.19" fill="#a4a4a4"/>
<ellipse cx="83.38" cy="318.85" rx="14.21" ry="12.86" fill="#b0b0b0"/>
<ellipse cx="83.38" cy="317.76" rx="14.41" ry="12.86" fill="#f4f1f1" stroke="#c4c4c4" stroke-width="0.6"/>
<ellipse cx="83.08" cy="317.46" rx="12.61" ry="11.06" fill="#f6f3f3" stroke="#ffffff" stroke-width="0.8" opacity="0.9"/>
<ellipse cx="192.10" cy="443.90" rx="15.10" ry="14.40" fill="#1a1274"/>
<rect x="177.00" y="442.40" width="30.20" height="1.50" fill="#1e167e"/>
<ellipse cx="192.10" cy="443.30" rx="14.90" ry="14.40" fill="#463eb4"/>
<ellipse cx="192.10" cy="442.40" rx="15.10" ry="14.40" fill="url(#bface)"/>
<ellipse cx="192.10" cy="442.40" rx="13.50" ry="12.80" fill="none" stroke="#241c88" stroke-width="1" opacity="0.6"/>
<ellipse cx="193.04" cy="411.64" rx="14.92" ry="13.96" fill="#1a1274"/>
<rect x="178.12" y="409.96" width="29.84" height="1.68" fill="#1e167e"/>
<ellipse cx="193.04" cy="410.86" rx="14.72" ry="13.96" fill="#463eb4"/>
<ellipse cx="193.04" cy="409.96" rx="14.92" ry="13.96" fill="url(#bface)"/>
<ellipse cx="193.04" cy="409.96" rx="13.32" ry="12.36" fill="none" stroke="#241c88" stroke-width="1" opacity="0.6"/>
<ellipse cx="303.30" cy="443.90" rx="15.10" ry="14.40" fill="#1a1274"/>
<rect x="288.20" y="442.40" width="30.20" height="1.50" fill="#1e167e"/>
<ellipse cx="303.30" cy="443.30" rx="14.90" ry="14.40" fill="#463eb4"/>
<ellipse cx="303.30" cy="442.40" rx="15.10" ry="14.40" fill="url(#bface)"/>
<ellipse cx="303.30" cy="442.40" rx="13.50" ry="12.80" fill="none" stroke="#241c88" stroke-width="1" opacity="0.6"/>
<ellipse cx="302.75" cy="411.64" rx="14.92" ry="13.96" fill="#1a1274"/>
<rect x="287.83" y="409.96" width="29.84" height="1.68" fill="#1e167e"/>
<ellipse cx="302.75" cy="410.86" rx="14.72" ry="13.96" fill="#463eb4"/>
<ellipse cx="302.75" cy="409.96" rx="14.92" ry="13.96" fill="url(#bface)"/>
<ellipse cx="302.75" cy="409.96" rx="13.32" ry="12.36" fill="none" stroke="#241c88" stroke-width="1" opacity="0.6"/>
<ellipse cx="302.22" cy="380.28" rx="14.75" ry="13.72" fill="#1a1274"/>
<rect x="287.48" y="378.42" width="29.49" height="1.85" fill="#1e167e"/>
<ellipse cx="302.22" cy="379.32" rx="14.55" ry="13.72" fill="#463eb4"/>
<ellipse cx="302.22" cy="378.42" rx="14.75" ry="13.72" fill="url(#bface)"/>
<ellipse cx="302.22" cy="378.42" rx="13.15" ry="12.12" fill="none" stroke="#241c88" stroke-width="1" opacity="0.6"/>
<ellipse cx="301.71" cy="349.66" rx="14.58" ry="13.34" fill="#1a1274"/>
<rect x="287.13" y="347.64" width="29.15" height="2.02" fill="#1e167e"/>
<ellipse cx="301.71" cy="348.54" rx="14.38" ry="13.34" fill="#463eb4"/>
<ellipse cx="301.71" cy="347.64" rx="14.58" ry="13.34" fill="url(#bface)"/>
<ellipse cx="301.71" cy="347.64" rx="12.98" ry="11.74" fill="none" stroke="#241c88" stroke-width="1" opacity="0.6"/>
<ellipse cx="332.90" cy="443.90" rx="15.10" ry="14.40" fill="#1a1274"/>
<rect x="317.80" y="442.40" width="30.20" height="1.50" fill="#1e167e"/>
<ellipse cx="332.90" cy="443.30" rx="14.90" ry="14.40" fill="#463eb4"/>
<ellipse cx="332.90" cy="442.40" rx="15.10" ry="14.40" fill="url(#bface)"/>
<ellipse cx="332.90" cy="442.40" rx="13.50" ry="12.80" fill="none" stroke="#241c88" stroke-width="1" opacity="0.6"/>
<ellipse cx="331.96" cy="411.64" rx="14.92" ry="13.96" fill="#1a1274"/>
<rect x="317.04" y="409.96" width="29.84" height="1.68" fill="#1e167e"/>
<ellipse cx="331.96" cy="410.86" rx="14.72" ry="13.96" fill="#463eb4"/>
<ellipse cx="331.96" cy="409.96" rx="14.92" ry="13.96" fill="url(#bface)"/>
<ellipse cx="331.96" cy="409.96" rx="13.32" ry="12.36" fill="none" stroke="#241c88" stroke-width="1" opacity="0.6"/>
<ellipse cx="392.09" cy="443.90" rx="15.10" ry="14.40" fill="#d8d8d8"/>
<rect x="376.99" y="442.40" width="30.20" height="1.50" fill="#a4a4a4"/>
<ellipse cx="392.09" cy="443.15" rx="14.90" ry="14.40" fill="#b0b0b0"/>
<ellipse cx="392.09" cy="442.40" rx="15.10" ry="14.40" fill="#e6e6e6" stroke="#c4c4c4" stroke-width="0.6"/>
<ellipse cx="391.79" cy="442.10" rx="13.30" ry="12.60" fill="#e8e8e8" stroke="#ffffff" stroke-width="0.8" opacity="0.9"/>
<ellipse cx="390.37" cy="411.64" rx="14.92" ry="13.96" fill="#d8d8d8"/>
<rect x="375.44" y="409.96" width="29.84" height="1.68" fill="#a4a4a4"/>
<ellipse cx="390.37" cy="410.80" rx="14.72" ry="13.96" fill="#b0b0b0"/>
<ellipse cx="390.37" cy="409.96" rx="14.92" ry="13.96" fill="#e6e6e6" stroke="#c4c4c4" stroke-width="0.6"/>
<ellipse cx="390.07" cy="409.66" rx="13.12" ry="12.16" fill="#e8e8e8" stroke="#ffffff" stroke-width="0.8" opacity="0.9"/>
<rect x="246.5" y="262" width="32" height="18.6" rx="3.5" fill="url(#cubeF)"/>
<rect x="245.8" y="242" width="32.8" height="30.5" rx="3.5" fill="url(#cube)"/>
<rect x="247.5" y="244" width="1.2" height="26" fill="#a8c0ff" opacity="0.8"/>
<text transform="translate(269.3,266.2) rotate(-90)" font-family="Liberation Serif" font-weight="bold" font-size="19.5" fill="#f2d44a" stroke="#f2d44a" stroke-width="0.7">64</text>
<text x="262" y="278.5" font-family="Liberation Serif" font-weight="bold" font-size="6.5" fill="#8a7c34" text-anchor="middle" letter-spacing="2.5">16</text>
<g transform="translate(306.2,277.5) rotate(28)">
<rect x="-12.5" y="-11" width="25" height="26.5" rx="5" fill="#160e62"/>
<rect x="-12.5" y="-13" width="25" height="24" rx="5" fill="#22198a"/>
</g>
<circle cx="304.8" cy="268.2" r="2.1" fill="#ffffff"/>
<circle cx="302.1" cy="272.5" r="2.1" fill="#ffffff"/>
<circle cx="299.9" cy="277.2" r="2.1" fill="#ffffff"/>
<circle cx="313.9" cy="272.9" r="2.1" fill="#ffffff"/>
<circle cx="311.2" cy="277.5" r="2.1" fill="#ffffff"/>
<circle cx="308.9" cy="281.8" r="2.1" fill="#ffffff"/>
<g transform="translate(382.3,262) rotate(42)">
<rect x="-11.8" y="-11" width="23.6" height="25" rx="5" fill="#160e62"/>
<rect x="-11.8" y="-12.5" width="23.6" height="23" rx="5" fill="#22198a"/>
</g>
<circle cx="377.6" cy="257.6" r="2.05" fill="#ffffff"/>
<circle cx="384.6" cy="258.5" r="2.05" fill="#ffffff"/>
<circle cx="391.8" cy="259.2" r="2.05" fill="#ffffff"/>
<polygon points="472.5,464 477.5,464 477.5,460.5 484.5,467 477.5,473.5 477.5,470 472.5,470" fill="#2a22a0"/>
</svg>
<!-- right panel -->
<!-- nav buttons -->
<div class="btn" style="left:531px;top:50.3px;width:15.5px;height:15.5px"></div>
<div class="btn" style="left:550px;top:50.3px;width:15px;height:15.5px"></div>
<div class="btn" style="left:569px;top:50.3px;width:15px;height:15.5px"></div>
<div class="btn" style="left:587.3px;top:50.3px;width:15.3px;height:15.5px"></div>
<div class="btn" style="left:606.3px;top:50.3px;width:15.5px;height:15.5px"></div>
<div class="btn" style="left:624.8px;top:50.3px;width:15.8px;height:15.5px"></div>
<svg class="a" style="left:0;top:0" width="752" height="70">
<polygon points="535,58 539.5,53.5 539.5,62.5" fill="#e85a5a" stroke="#b03030" stroke-width="0.5"/>
<polygon points="538.5,58 543,53.5 543,62.5" fill="#e85a5a" stroke="#b03030" stroke-width="0.5"/>
<polygon points="554,58 560,53 560,63" fill="#7ada6a" stroke="#309030" stroke-width="0.5"/>
<polygon points="579,58 573,53 573,63" fill="#7ada6a" stroke="#309030" stroke-width="0.5"/>
<polygon points="598.5,58 594,53.5 594,62.5" fill="#e85a5a" stroke="#b03030" stroke-width="0.5"/>
<polygon points="595,58 590.5,53.5 590.5,62.5" fill="#e85a5a" stroke="#b03030" stroke-width="0.5"/>
<path d="M611,59 L615,55 L615,63 Z" fill="#6ad060" stroke="#208020" stroke-width="0.6"/>
<path d="M613,56 Q615,52 618,54 Q619,57 615,59 M615,61 L615,62.5" fill="none" stroke="#101010" stroke-width="1.3"/>
<path d="M633,59 L629,55 L629,63 Z" fill="#6ad060" stroke="#208020" stroke-width="0.6"/>
<path d="M629,56 Q631,52 634,54 Q635,57 631,59 M631,61 L631,62.5" fill="none" stroke="#101010" stroke-width="1.3"/>
</svg>
<div class="btn" style="left:644px;top:50.3px;width:104.5px;height:15.5px"></div>
<div class="a list" style="left:648px;top:52.8px">Game 1: gnubg 0, anth</div>
<div class="a" style="left:737px;top:52.5px;width:1px;height:11px;background:#d0ccc6"></div>
<svg class="a" style="left:738px;top:52px" width="8" height="12"><polygon points="4,1.5 6.5,4.5 1.5,4.5" fill="#202020"/><polygon points="4,10 6.5,7 1.5,7" fill="#202020"/></svg>
<!-- tree view -->
<div class="a" style="left:528.5px;top:69px;width:214px;height:267px;background:#fff;border:1px solid #8e8a84;border-top:1.5px solid #4a4844;border-right:none"></div>
<div class="a" style="left:529.5px;top:70px;width:212px;height:14px;background:#ece9e5;border-bottom:1px solid #c8c4bc"></div>
<div class="a" style="left:541px;top:71px;width:1px;height:12px;background:#d0ccc6"></div>
<div class="a" style="left:648px;top:71px;width:1px;height:12px;background:#d0ccc6"></div>
<div class="a list" style="left:535.5px;top:73px">#</div>
<div class="a list" style="left:544.5px;top:73px">gnubg</div>
<div class="a list" style="left:651.5px;top:73px">anthon</div>
<div class="a" style="left:650px;top:95.8px;width:90.5px;height:9.6px;background:#000"></div>
<div class="a list" style="left:536.5px;top:85.1px;line-height:10.6px">
<div style="position:relative">0<br>1<br>2<br>3<br>4<br>5<br>6<br>7<br>8<br>9<br><span style="margin-left:-3.5px">10</span></div></div>
<div class="a list" style="left:545.5px;top:85.1px;line-height:10.6px">&nbsp;<br>22: 24/22(2) 6/4(2)<br>63: 13/10*/4<br>14: 13/8<br>35: 13/5<br>24: 6/2 4/2<br>46: 8/4 8/2<br>52: 8/3 5/3<br>65: 13/8 13/7<br>44: 8/4 7/3 6/2(2)<br>Drop</div>
<div class="a list" style="left:652px;top:85.1px;line-height:10.6px">13: 8/5 6/5<br><span style="color:#fff">36: 24/15</span><br>13: bar/22 6/5<br>32: 24/22 13/10<br>64: 10/4 8/4<br>66: 22/16(2) 13/7(2)<br>31: 8/4<br>36: 16/13 16/10<br>64: 13/7 10/6<br>Double to 2</div>
<!-- tree scrollbar -->
<div class="a" style="left:742.5px;top:69px;width:9.5px;height:267.5px;background:#e2ded9;border-left:1px solid #c8c4bc"></div>
<div class="a" style="left:743.5px;top:70px;width:8px;height:9px;background:#f2efec;border:1px solid #bcb8b0"></div>
<div class="a" style="left:743.5px;top:79px;width:8px;height:248px;background:#f4f2ef;border:1px solid #bcb8b0"></div>
<div class="a" style="left:743.5px;top:327px;width:8px;height:9px;background:#f2efec;border:1px solid #bcb8b0"></div>
<!-- labels & combos -->
<div class="a list" style="left:538px;top:339.6px">Didn't double</div>
<div class="a list" style="left:607px;top:339.6px">Rolled 36 (-0.047)</div>
<div class="a list" style="left:692px;top:339.6px">Moved 24/15</div>
<div class="btn" style="left:529px;top:350.2px;width:68.5px;height:16px"></div>
<div class="btn" style="left:599px;top:350.2px;width:83px;height:16px"></div>
<div class="btn" style="left:683.5px;top:350.2px;width:67.5px;height:16px"></div>
<div class="a" style="left:585.5px;top:352.5px;width:1px;height:11px;background:#d0ccc6"></div>
<div class="a" style="left:670px;top:352.5px;width:1px;height:11px;background:#d0ccc6"></div>
<div class="a" style="left:739px;top:352.5px;width:1px;height:11px;background:#d0ccc6"></div>
<svg class="a" style="left:0;top:350px" width="752" height="17">
<g fill="#202020"><polygon points="591.5,4.5 593.5,7 589.5,7"/><polygon points="591.5,12 593.5,9.5 589.5,9.5"/>
<polygon points="675.5,4.5 677.5,7 673.5,7"/><polygon points="675.5,12 677.5,9.5 673.5,9.5"/>
<polygon points="744.5,4.5 746.5,7 742.5,7"/><polygon points="744.5,12 746.5,9.5 742.5,9.5"/></g></svg>
<!-- tabs -->
<div class="a" style="left:582.8px;top:371px;width:58px;height:15px;background:#d6d2cc;border:1px solid #a8a39a;border-bottom:none;border-radius:2px 2px 0 0"></div>
<div class="a" style="left:528.8px;top:369.2px;width:54.5px;height:17px;background:#efebe7;border:1px solid #a8a39a;border-bottom:none;border-radius:2px 2px 0 0"></div>
<div class="a list" style="left:531.7px;top:373px">Checker play</div>
<div class="a list" style="left:585.5px;top:374px">Cube decision</div>
<!-- analysis list -->
<div class="a" style="left:528.8px;top:385.5px;width:222px;height:154px;border:1px solid #a8a39a;border-top:none"></div>
<div class="a" style="left:529.8px;top:386px;width:211.5px;height:118.5px;background:#fff"></div>
<div class="a" style="left:529.8px;top:410px;width:211.5px;height:1px;background:#dcd8d2"></div>
<div class="a" style="left:529.8px;top:438px;width:211.5px;height:1px;background:#dcd8d2"></div>
<div class="a" style="left:529.8px;top:465.8px;width:211.5px;height:1px;background:#dcd8d2"></div>
<div class="a" style="left:529.8px;top:492.8px;width:211.5px;height:1px;background:#dcd8d2"></div>
<div class="a" style="left:0;top:0;width:741px;height:505px;overflow:hidden"><div class="r1" style="left:546.9px;top:385.9px">1</div>
<div class="r1" style="left:558.1px;top:385.9px">Cubeful 2-ply</div>
<div class="r1" style="left:617.8px;top:385.9px">-0.063</div>
<div class="r1 bd" style="left:680.8px;top:386.2px">24/18 13/10</div>
<div class="r2" style="left:541.9px;top:397.5px">0.493</div>
<div class="r2" style="left:567.7px;top:397.5px">0.112</div>
<div class="r2" style="left:593.4px;top:397.5px">0.003</div>
<div class="r2" style="left:620px;top:397.5px">-</div>
<div class="r2" style="left:628.9px;top:397.5px">0.507</div>
<div class="r2" style="left:654.9px;top:397.5px">0.148</div>
<div class="r2" style="left:680.8px;top:397.5px">0.005</div>
<div class="r1 red" style="left:546.9px;top:413.6px">2</div>
<div class="r1 red" style="left:558.1px;top:413.6px">Cubeful 2-ply</div>
<div class="r1 red" style="left:617.8px;top:413.6px">-0.064</div>
<div class="r1 red" style="left:650.6px;top:413.6px">-0.002</div>
<div class="r1 bd red" style="left:680.8px;top:413.9px">24/15</div>
<div class="r2" style="left:541.9px;top:425.2px">0.494</div>
<div class="r2" style="left:567.7px;top:425.2px">0.101</div>
<div class="r2" style="left:593.4px;top:425.2px">0.002</div>
<div class="r2" style="left:620px;top:425.2px">-</div>
<div class="r2" style="left:628.9px;top:425.2px">0.506</div>
<div class="r2" style="left:654.9px;top:425.2px">0.142</div>
<div class="r2" style="left:680.8px;top:425.2px">0.004</div>
<div class="r1" style="left:546.9px;top:441.2px">3</div>
<div class="r1" style="left:558.1px;top:441.2px">Cubeful 2-ply</div>
<div class="r1" style="left:617.8px;top:441.2px">-0.153</div>
<div class="r1" style="left:650.6px;top:441.2px">-0.090</div>
<div class="r1 bd" style="left:680.8px;top:441.5px">13/4</div>
<div class="r2" style="left:541.9px;top:452.8px">0.463</div>
<div class="r2" style="left:567.7px;top:452.8px">0.123</div>
<div class="r2" style="left:593.4px;top:452.8px">0.004</div>
<div class="r2" style="left:620px;top:452.8px">-</div>
<div class="r2" style="left:628.9px;top:452.8px">0.537</div>
<div class="r2" style="left:654.9px;top:452.8px">0.161</div>
<div class="r2" style="left:680.8px;top:452.8px">0.008</div>
<div class="r1" style="left:546.9px;top:468.6px">4</div>
<div class="r1" style="left:558.1px;top:468.6px">Cubeful 2-ply</div>
<div class="r1" style="left:617.8px;top:468.6px">-0.158</div>
<div class="r1" style="left:650.6px;top:468.6px">-0.095</div>
<div class="r1 bd" style="left:680.8px;top:468.9px">13/10 13/7</div>
<div class="r2" style="left:541.9px;top:480.2px">0.463</div>
<div class="r2" style="left:567.7px;top:480.2px">0.126</div>
<div class="r2" style="left:593.4px;top:480.2px">0.004</div>
<div class="r2" style="left:620px;top:480.2px">-</div>
<div class="r2" style="left:628.9px;top:480.2px">0.537</div>
<div class="r2" style="left:654.9px;top:480.2px">0.161</div>
<div class="r2" style="left:680.8px;top:480.2px">0.009</div>
<div class="r1" style="left:546.9px;top:496.0px">5</div>
<div class="r1" style="left:558.1px;top:496.0px">Cubeful 0-ply</div>
<div class="r1" style="left:617.8px;top:496.0px">-0.251</div>
<div class="r1" style="left:650.6px;top:496.0px">-0.189</div>
<div class="r1 bd" style="left:680.8px;top:496.3px">24/18 8/5</div></div>
<div class="dbtn" style="left:530.5px;top:506.6px;width:29.6px;height:14.7px">Eval</div>
<div class="ebtn" style="left:562.4px;top:506.6px;width:11.8px;height:14.7px">...</div>
<div class="dbtn" style="left:576.5px;top:506.6px;width:9.1px;height:14.7px">0</div>
<div class="dbtn" style="left:588.1px;top:506.6px;width:9.1px;height:14.7px">1</div>
<div class="dbtn" style="left:599.5px;top:506.6px;width:9.8px;height:14.7px">2</div>
<div class="dbtn" style="left:611.2px;top:506.6px;width:10.0px;height:14.7px">3</div>
<div class="dbtn" style="left:623px;top:506.6px;width:9.8px;height:14.7px">4</div>
<div class="ebtn" style="left:634.9px;top:506.6px;width:25.1px;height:14.7px">Show</div>
<div class="dbtn" style="left:662.5px;top:506.6px;width:23.5px;height:14.7px">MWC</div>
<div class="ebtn" style="left:687.6px;top:506.6px;width:45.9px;height:14.7px;background:linear-gradient(#b4b0aa,#a4a09a);border-color:#8a867e">Details</div>
<div class="dbtn" style="left:530.5px;top:523.5px;width:29.6px;height:14.7px">Rollout</div>
<div class="ebtn" style="left:562.4px;top:523.5px;width:11.8px;height:14.7px">...</div>
<div class="dbtn" style="left:576.5px;top:523.5px;width:9.1px;height:14.7px">a</div>
<div class="dbtn" style="left:588.1px;top:523.5px;width:9.1px;height:14.7px">b</div>
<div class="dbtn" style="left:599.5px;top:523.5px;width:9.8px;height:14.7px">c</div>
<div class="dbtn" style="left:611.2px;top:523.5px;width:10.0px;height:14.7px">d</div>
<div class="dbtn" style="left:623px;top:523.5px;width:9.8px;height:14.7px">e</div>
<div class="dbtn" style="left:634.9px;top:523.5px;width:25.1px;height:14.7px">Move</div>
<div class="dbtn" style="left:662.5px;top:523.5px;width:23.5px;height:14.7px">Copy</div>
<div class="dbtn" style="left:687.6px;top:523.5px;width:45.9px;height:14.7px">Temp. Map</div>
<div class="a" style="left:664.4px;top:541.7px;width:88px;height:15.3px;background:#f6f4f2;border-top:1px solid #c4c0b8;border-left:1px solid #c4c0b8"></div>
<div class="a" style="left:678.7px;top:542px;width:1px;height:15px;background:#d4d0ca"></div>
<div class="a" style="left:692.5px;top:542px;width:1px;height:15px;background:#d4d0ca"></div>
<div class="a" style="left:706.3px;top:542px;width:1px;height:15px;background:#d4d0ca"></div>
<div class="a" style="left:720.9px;top:542px;width:1px;height:15px;background:#d4d0ca"></div>
<div class="a" style="left:734.6px;top:542px;width:1px;height:15px;background:#d4d0ca"></div>
<!-- analysis scrollbar -->
<div class="a" style="left:741.5px;top:386px;width:9px;height:118.5px;background:#cdc9c3;border-left:1px solid #c8c4bc"></div>
<div class="a" style="left:742.3px;top:387px;width:8px;height:9px;background:#f2efec;border:1px solid #bcb8b0"></div>
<div class="a" style="left:742.3px;top:396px;width:8px;height:39px;background:#f4f2ef;border:1px solid #bcb8b0"></div>
<div class="a" style="left:742.3px;top:494.5px;width:8px;height:9px;background:#f2efec;border:1px solid #bcb8b0"></div>
<svg class="a" style="left:742px;top:386px" width="9" height="119"><polygon points="4.5,4 6.5,6.5 2.5,6.5" fill="#202020"/><polygon points="4.5,114 6.5,111.5 2.5,111.5" fill="#202020"/></svg>
<style>
.r1{position:absolute;font-size:8.4px;color:#101010}
.r2{position:absolute;font-size:8.4px;color:#a4a09c}
.bd{font-weight:bold;font-size:9px;letter-spacing:0.25px}
.red{color:#ee2222}
.dbtn{position:absolute;border:1px solid #bdb8b0;border-radius:2px;background:#cfcbc6;color:#eeebe8;font-size:8.4px;text-align:center;line-height:13px}
.ebtn{position:absolute;border:1px solid #a9a49c;border-radius:2px;background:linear-gradient(#fbfaf9,#ebe8e4);color:#101010;font-size:8.4px;text-align:center;line-height:13px}
</style>

<!-- bottom panel -->
<div class="a" style="left:0;top:496.5px;width:524.5px;height:43px;border-top:1px solid #d8d4ce;border-bottom:1px solid #cfcac3"></div>
<div class="a" style="left:116.5px;top:497px;width:1px;height:42px;background:#d4cfc8"></div>
<div class="a" style="left:278px;top:497px;width:1px;height:42px;background:#d4cfc8"></div>
<div class="a" style="left:523.5px;top:497px;width:1px;height:42px;background:#d4cfc8"></div>
<div class="a" style="left:1px;top:499.2px;width:12px;height:12.5px;background:#d6d2cc"></div><div class="a" style="left:1.6px;top:499.8px;width:10.8px;height:11px;border-radius:50%;background:radial-gradient(circle at 45% 45%,#fff 60%,#c8c8c8 85%,#a0a0a0)"></div>
<div class="a" style="left:18px;top:500.8px">gnubg</div>
<div class="a" style="left:2px;top:516.8px">Score:</div>
<div class="a" style="left:46.5px;top:516.8px">0</div>
<div class="a" style="left:2px;top:530.3px">Pips: 159 (-4)</div>
<div class="a" style="left:118.7px;top:499.2px;width:12px;height:12.5px;background:#d6d2cc"></div><div class="a" style="left:119.3px;top:499.8px;width:10.8px;height:11px;border-radius:50%;background:radial-gradient(circle at 40% 40%,#3a34e0 35%,#1c14a0 80%,#100a60)"></div>
<div class="a" style="left:135.5px;top:500.8px">anthon</div>
<div class="a" style="left:119px;top:516.8px">Score:</div>
<div class="a" style="left:164.5px;top:516.8px">0</div>
<div class="a" style="left:119px;top:530.3px">Pips: 163 (+4)</div>
<div class="a" style="left:282.3px;top:510.8px">Match: unlimited</div>
<div class="a" style="left:282.3px;top:526.8px;width:6.5px;height:6.5px;border:1px solid #c8c4bc;background:#f4f2ef"></div>
<div class="a dis" style="left:293px;top:524.5px">Crawford game</div>
</body></html>
